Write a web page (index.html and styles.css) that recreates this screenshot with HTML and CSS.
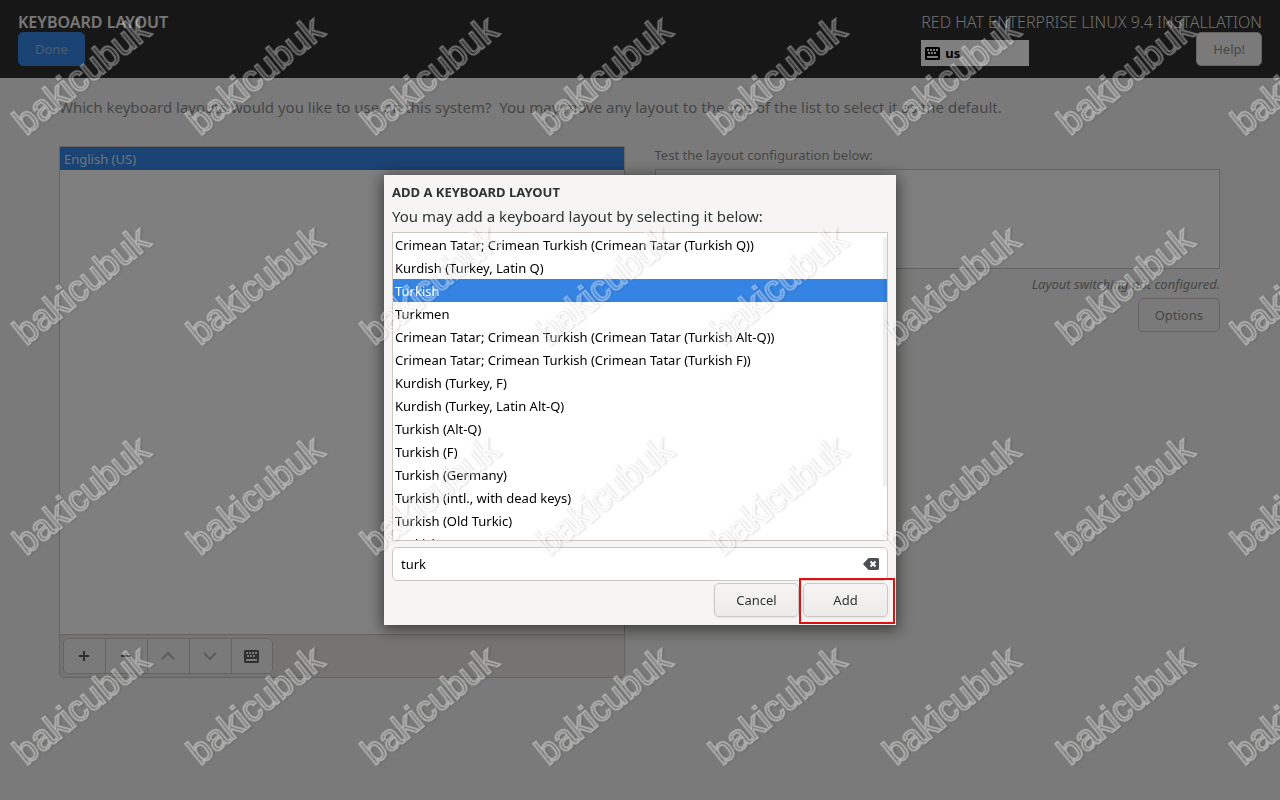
FILE: index.html
```html
<!DOCTYPE html>
<html lang="en">
<head>
<meta charset="utf-8">
<title>Keyboard Layout</title>
<link rel="stylesheet" href="styles.css">
</head>
<body>
<svg class="defs" aria-hidden="true">
  <symbol id="keyboard" viewBox="0 0 15 13">
    <path fill-rule="evenodd" d="M1 0h13l1 1v11l-1 1H1l-1-1V1zM2 2v2h2V2zM5 2v2h2V2zM8 2v2h2V2zM11 2v2h2V2zM3 5v2h2V5zM6 5v2h2V5zM9 5v2h2V5zM2 9v2h11V9z"/>
  </symbol>
</svg>
<div class="page">
  <header class="header">
    <div class="header-left">
      <h1 class="title">KEYBOARD LAYOUT</h1>
      <button class="btn done" type="button">Done</button>
    </div>
    <div class="header-right">
      <p class="product">RED HAT ENTERPRISE LINUX 9.4 INSTALLATION</p>
      <div class="header-tools">
        <button class="indicator" type="button"><svg class="kb"><use href="#keyboard"/></svg>us</button>
        <button class="btn help" type="button">Help!</button>
      </div>
    </div>
  </header>
  <main class="main">
    <p class="intro">Which keyboard layouts would you like to use on this system?&nbsp; You may move any layout to the top of the list to select it as the default.</p>
    <div class="columns">
      <section class="layouts">
        <ul class="layout-list"><li class="layout-row">English (US)</li></ul>
        <div class="toolbar">
          <div class="group">
            <button class="tool" type="button" aria-label="Add layout"><svg class="glyph" viewBox="0 0 16 16"><path d="M8 3v10M3 8h10"/></svg></button>
            <button class="tool" type="button" aria-label="Remove layout"><svg class="glyph" viewBox="0 0 16 16"><path d="M3 8h10"/></svg></button>
            <button class="tool off" type="button" aria-label="Move up"><svg class="glyph" viewBox="0 0 16 16"><path d="M2 11l6-6 6 6"/></svg></button>
            <button class="tool off" type="button" aria-label="Move down"><svg class="glyph" viewBox="0 0 16 16"><path d="M2 5l6 6 6-6"/></svg></button>
            <button class="tool" type="button" aria-label="Preview layout"><svg class="kb"><use href="#keyboard"/></svg></button>
          </div>
        </div>
      </section>
      <section class="testing">
        <label class="test-label" for="test">Test the layout configuration below:</label>
        <textarea class="test-box" id="test"></textarea>
        <p class="switching">Layout switching not configured.</p>
        <button class="btn options" type="button">Options</button>
      </section>
    </div>
  </main>
</div>

<div class="backdrop">
  <div class="dialog" role="dialog" aria-labelledby="dialog-title">
    <h2 class="dialog-title" id="dialog-title">ADD A KEYBOARD LAYOUT</h2>
    <label class="dialog-text" for="filter">You may add a keyboard layout by selecting it below:</label>
    <div class="choices">
      <ul class="choice-list">
        <li class="choice">Crimean Tatar; Crimean Turkish (Crimean Tatar (Turkish Q))</li>
        <li class="choice">Kurdish (Turkey, Latin Q)</li>
        <li class="choice selected">Turkish</li>
        <li class="choice">Turkmen</li>
        <li class="choice">Crimean Tatar; Crimean Turkish (Crimean Tatar (Turkish Alt-Q))</li>
        <li class="choice">Crimean Tatar; Crimean Turkish (Crimean Tatar (Turkish F))</li>
        <li class="choice">Kurdish (Turkey, F)</li>
        <li class="choice">Kurdish (Turkey, Latin Alt-Q)</li>
        <li class="choice">Turkish (Alt-Q)</li>
        <li class="choice">Turkish (F)</li>
        <li class="choice">Turkish (Germany)</li>
        <li class="choice">Turkish (intl., with dead keys)</li>
        <li class="choice">Turkish (Old Turkic)</li>
        <li class="choice">Turkish (Ottoman)</li>
      </ul>
      <span class="scrollbar"></span>
    </div>
    <div class="entry">
      <input class="filter" id="filter" type="text" value="turk">
      <button class="clear" type="button" aria-label="Clear"><svg class="clear-icon" viewBox="0 0 16 12"><path fill="#4b4f50" d="M5.500 0H15l1 1v10l-1 1H5.500L0 6z"/><path d="M7.500 3.500l5 5m0-5l-5 5" stroke="#fff" stroke-width="2" fill="none"/></svg></button>
    </div>
    <div class="actions">
      <button class="btn action" type="button">Cancel</button>
      <button class="btn action add" type="button">Add</button>
    </div>
  </div>
</div>

<div class="watermarks" aria-hidden="true">
  <span class="mark">bakicubuk</span><span class="mark">bakicubuk</span><span class="mark">bakicubuk</span><span class="mark">bakicubuk</span><span class="mark">bakicubuk</span><span class="mark">bakicubuk</span><span class="mark">bakicubuk</span><span class="mark">bakicubuk</span>
  <span class="mark">bakicubuk</span><span class="mark">bakicubuk</span><span class="mark">bakicubuk</span><span class="mark">bakicubuk</span><span class="mark">bakicubuk</span><span class="mark">bakicubuk</span><span class="mark">bakicubuk</span><span class="mark">bakicubuk</span>
  <span class="mark">bakicubuk</span><span class="mark">bakicubuk</span><span class="mark">bakicubuk</span><span class="mark">bakicubuk</span><span class="mark">bakicubuk</span><span class="mark">bakicubuk</span><span class="mark">bakicubuk</span><span class="mark">bakicubuk</span>
  <span class="mark">bakicubuk</span><span class="mark">bakicubuk</span><span class="mark">bakicubuk</span><span class="mark">bakicubuk</span><span class="mark">bakicubuk</span><span class="mark">bakicubuk</span><span class="mark">bakicubuk</span><span class="mark">bakicubuk</span>
</div>
</body>
</html>
```
FILE: styles.css
```css
* { box-sizing: border-box; }
body, h1, h2, p, ul { margin: 0; padding: 0; }
body, button, input, textarea { font-family: "Noto Sans", sans-serif; font-size: 13px; }
body { color: #2e3436; background: #f6f5f4; }
ul { list-style: none; }
.defs { position: absolute; width: 0; height: 0; }
.page { min-height: 100vh; display: flex; flex-direction: column; background: #f6f5f4; }

.btn { height: 34px; padding: 0 16px; border: 1px solid #cdc7c2; border-radius: 5px; color: #2e3436; background: #f6f5f4; }
.kb { width: 15px; height: 13px; fill: currentColor; }

.header { display: flex; justify-content: space-between; padding: 12px 18px; background: #2f2f2f; }
.title, .product { font-size: 16px; line-height: 20px; color: #fff; }
.title { font-weight: 600; color: #f0f0f0; }
.product { color: #ddd; font-weight: 350; }
.done { color: #9cb8da; background: #3584e4; border-color: #3584e4; }
.help { color: #8b8e8f; }
.header-tools { display: flex; justify-content: space-between; align-items: flex-end; }
.indicator { display: flex; align-items: center; gap: 5px; width: 108px; height: 26px; padding: 0 4px; border: 0; background: #fff; color: #000; font-weight: 700; }

.main { flex: 1; display: flex; flex-direction: column; padding: 18px 60px 122px 59px; }
.intro { font-size: 15px; line-height: 22px; color: #8b8e8f; }
.columns { flex: 1; display: grid; grid-template-columns: 1fr 1fr; gap: 30px; padding-top: 28px; }
.layouts { display: flex; flex-direction: column; border: 1px solid #cdc7c2; border-radius: 0 0 5px 5px; }
.layout-list { flex: 1; background: #fff; }
.layout-row { line-height: 21px; padding: 2px 4px 0; background: #3584e4; color: #dde7f4; }
.toolbar { padding: 3px; border-top: 1px solid #cdc7c2; border-radius: 0 0 5px 5px; background: #ebe9e7; }
.group { display: inline-flex; vertical-align: top; border: 1px solid #cdc7c2; border-radius: 5px; overflow: hidden; }
.tool { display: grid; place-items: center; width: 42px; height: 34px; padding: 0 1px 0 0; border: 0; border-right: 1px solid #cdc7c2; background: #f6f5f4; color: #5f6263; }
.tool:last-child { border-right: 0; width: 40px; }
.tool.off { color: #b9b9b7; }
.glyph { width: 16px; height: 16px; fill: none; stroke: currentColor; stroke-width: 2; }

.testing { display: flex; flex-direction: column; align-items: flex-end; color: #8b8e8f; }
.test-label { align-self: flex-start; line-height: 18px; margin-bottom: 5px; }
.test-box { align-self: stretch; height: 100px; border: 1px solid #cdc7c2; background: #fff; resize: none; }
.switching { font-style: italic; line-height: 18px; margin: 6px 0 5px; }
.options { color: #8b8e8f; }

.backdrop { position: fixed; inset: 0; display: flex; align-items: center; justify-content: center; background: rgba(0, 0, 0, .5); }
.dialog { display: flex; flex-direction: column; width: 40%; padding: 8px; background: #f6f5f4; box-shadow: 0 3px 14px 2px rgba(0, 0, 0, .5); }
.dialog-title { font-size: 13px; line-height: 18px; font-weight: 700; }
.dialog-text { font-size: 15px; line-height: 22px; margin: 4px 0 5px; }
.choices { position: relative; height: 309px; border: 1px solid #cdc7c2; background: #fff; overflow: hidden; }
.choice { line-height: 21px; padding: 2px 2px 0; color: #000; white-space: nowrap; }
.selected { background: #3584e4; color: #fff; }
.scrollbar { position: absolute; top: 4px; right: 0; width: 4px; height: 250px; border-radius: 2px; background: rgba(46, 52, 54, .08); }
.entry { display: flex; align-items: center; height: 34px; margin: 6px 0 2px; padding: 0 8px; border: 1px solid #cdc7c2; border-radius: 5px; background: #fff; }
.filter { flex: 1; min-width: 0; padding: 0; border: 0; outline: 0; background: none; color: #000; }
.clear { padding: 0; border: 0; background: none; }
.clear-icon { display: block; width: 16px; height: 12px; }
.actions { display: flex; justify-content: flex-end; gap: 4px; }
.action { width: 85px; background: linear-gradient(#f6f5f4, #edebe9); box-shadow: 0 1px 2px rgba(0, 0, 0, .08); }
.add { position: relative; }
.add::after { content: ""; position: absolute; inset: -6px -8px -8px -5px; border: 2px solid #e01010; }

.watermarks { position: fixed; inset: 0; display: grid; grid-template-columns: repeat(8, 174px); grid-auto-rows: 210px; overflow: hidden; pointer-events: none; }
.mark { display: block; width: 164px; height: 42px; margin: 103px 0 0 27px; font: 36px/42px "Liberation Sans", sans-serif; color: transparent; -webkit-text-stroke: 2px #fff; opacity: .38; filter: drop-shadow(1px 1px 1px rgba(0, 0, 0, .4)); transform: rotate(-39deg); transform-origin: 0 34px; }
```
